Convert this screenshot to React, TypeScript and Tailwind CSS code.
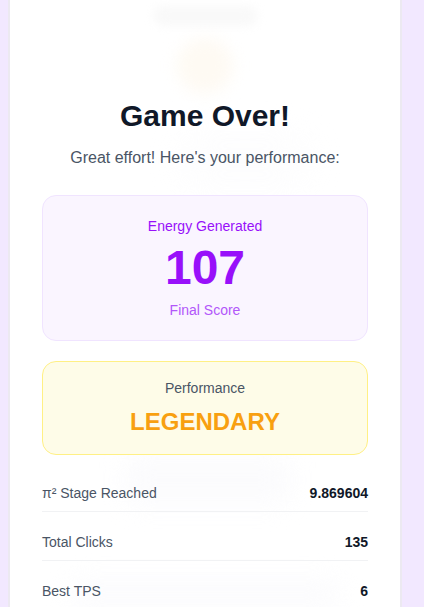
import React from "react";

export default function App() {
  const stats = [
    { label: "π² Stage Reached", value: "9.869604" },
    { label: "Total Clicks", value: "135" },
    { label: "Best TPS", value: "6" },
  ];
  return (
    <div
      className="w-[424px] h-[607px] overflow-hidden bg-[#f2e8ff]"
      style={{ fontFamily: '"Liberation Sans", Arial, sans-serif' }}
    >
      <div className="relative ml-[10px] w-[390px] h-[607px] bg-white shadow-[0_0_0_2px_#ece9f1]">
        {/* faint blurred backdrop shapes */}
        <div className="pointer-events-none absolute left-[115px] top-[455px] w-[165px] h-[50px] rounded-xl bg-[#f9f9fc] blur-md opacity-60" />
        <div className="pointer-events-none absolute left-[60px] top-[580px] w-[270px] h-[30px] rounded-full bg-[#f9f9fc] blur-md opacity-60" />
        <div className="pointer-events-none absolute left-[170px] top-[135px] w-[130px] h-[50px] rounded-full bg-[#fafafc] blur-lg opacity-40" />

        <div className="relative px-8 flex flex-col">
          <div className="mx-auto mt-[6px] w-[105px] h-[20px] rounded-full bg-[#f9f9f9] blur-[4px]" />
          <div className="mx-auto mt-[12px] w-[56px] h-[56px] rounded-full bg-[#fefaf3] blur-[8px]" />

          <h1 className="mt-[4px] text-center text-[30px] leading-[36px] font-bold text-[#101828]">
            Game Over!
          </h1>
          <p className="mt-3 text-center text-base leading-6 text-[#4a5565]">
            Great effort! Here's your performance:
          </p>

          <div className="mt-[25px] rounded-[14px] border border-[#f0e4ff] bg-[#faf5ff] p-5 text-center">
            <div className="text-sm leading-5 text-[#9810fa]">Energy Generated</div>
            <div className="mt-2 text-5xl leading-none font-bold text-[#9810fa]">107</div>
            <div className="mt-2 text-sm leading-5 text-[#b257fa]">Final Score</div>
          </div>

          <div className="mt-5 rounded-[14px] border border-[#fff085] bg-[#fefce8] p-4 text-center">
            <div className="text-sm leading-5 text-[#4a5565]">Performance</div>
            <div className="mt-2 text-2xl leading-8 font-bold text-[#f8a010]">LEGENDARY</div>
          </div>

          <div className="mt-5 flex flex-col gap-3">
            {stats.map((s) => (
              <div
                key={s.label}
                className="flex items-center justify-between py-2 border-b border-[#f1f2f4] text-sm leading-5"
              >
                <span className="text-[#4a5565]">{s.label}</span>
                <span className="font-bold text-[#101828]">{s.value}</span>
              </div>
            ))}
          </div>
        </div>
      </div>
    </div>
  );
}
